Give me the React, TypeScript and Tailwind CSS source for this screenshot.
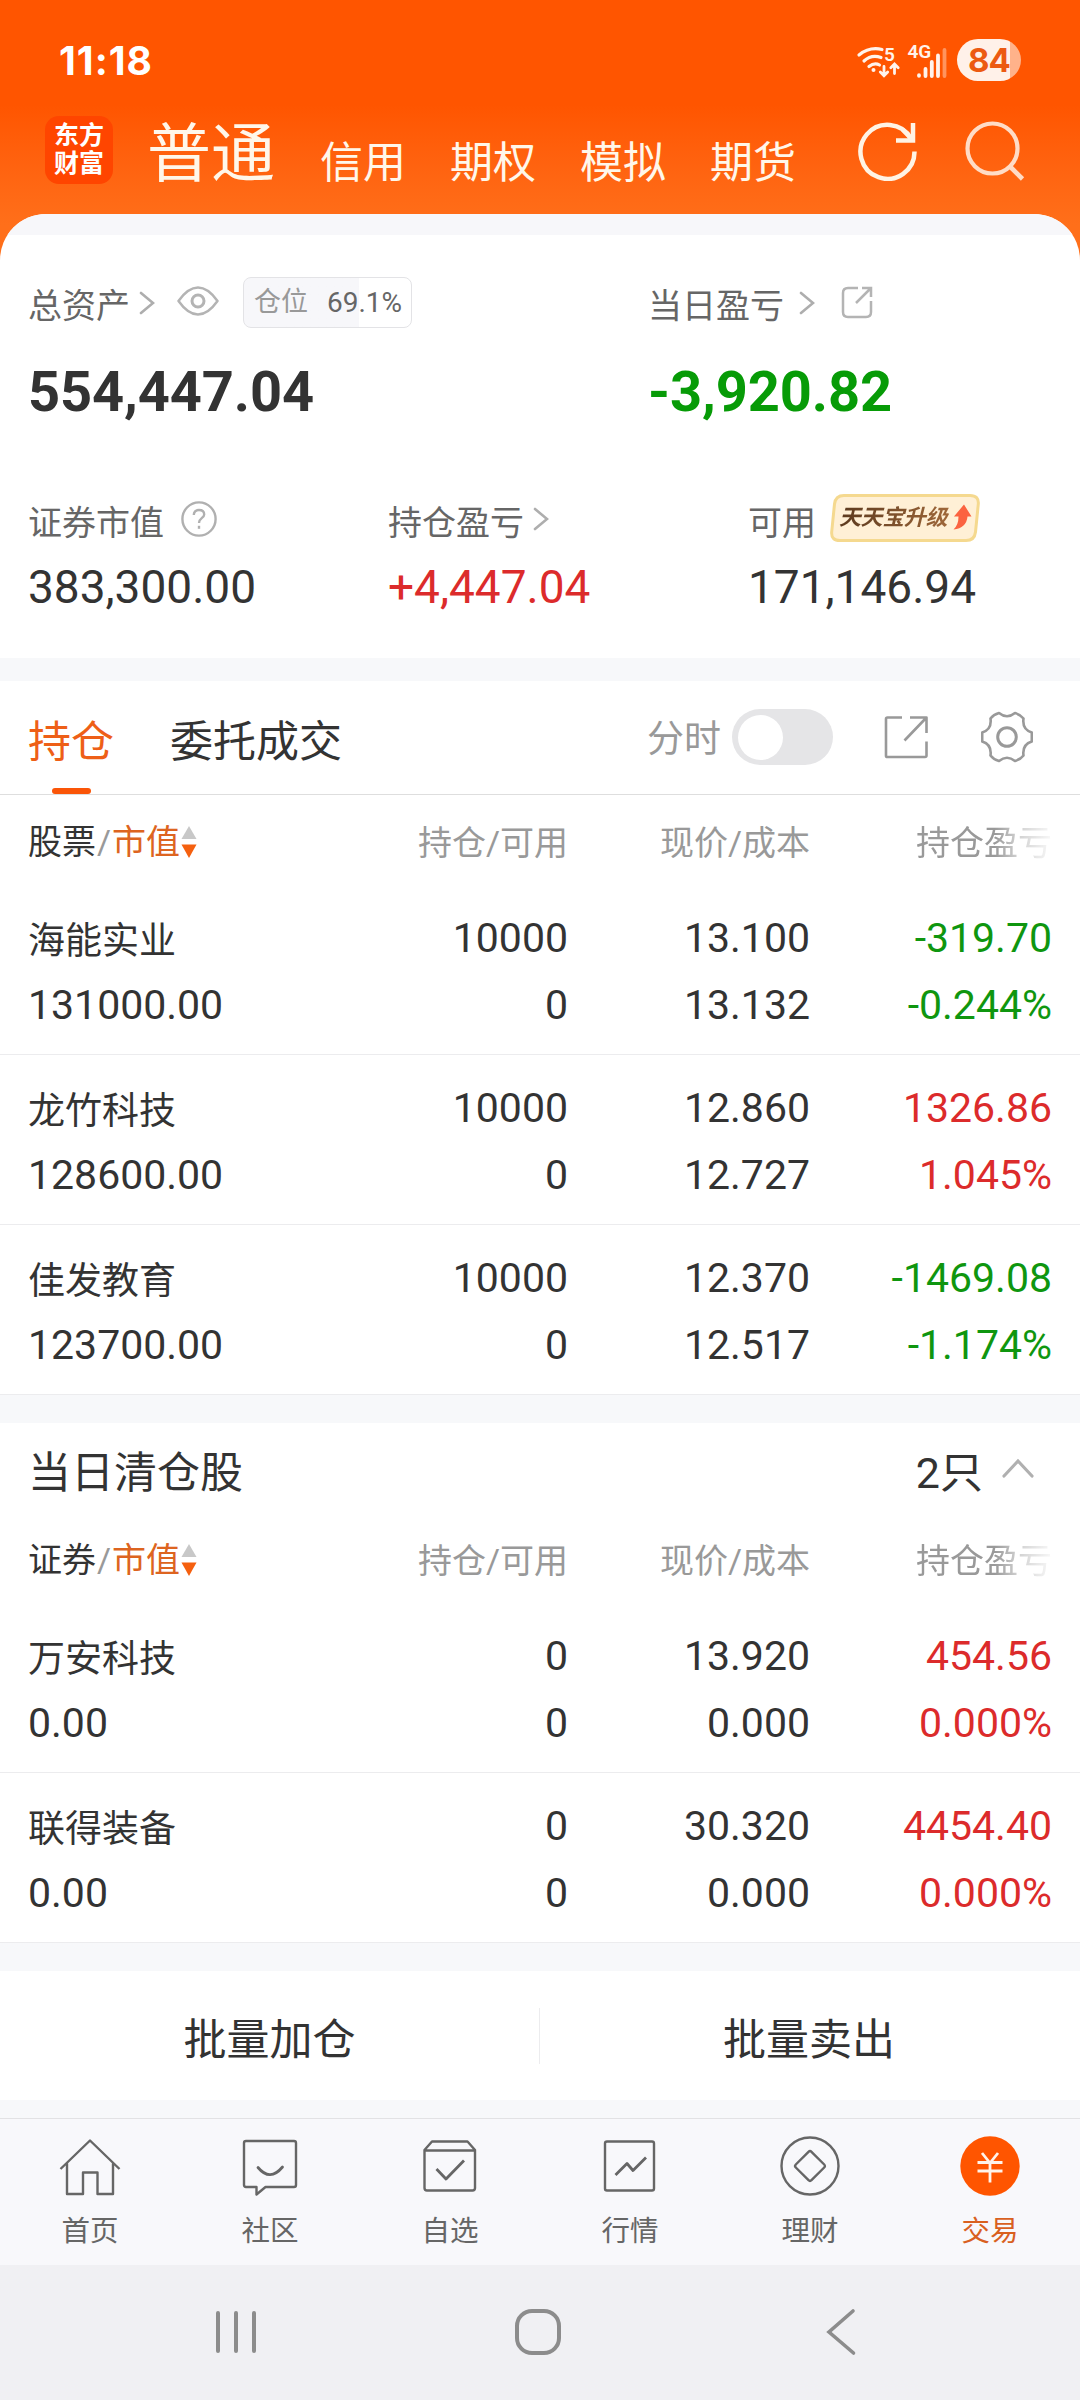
import type { ReactNode } from "react";

/* ──────────────────────────────────────────────
   Data
   ────────────────────────────────────────────── */
type Tone = "up" | "down";

type Holding = {
  name: string;
  value: string;
  amount: string;
  usable: string;
  price: string;
  cost: string;
  profit: string;
  rate: string;
  tone: Tone;
};

const holdings: Holding[] = [
  { name: "海能实业", value: "131000.00", amount: "10000", usable: "0", price: "13.100", cost: "13.132", profit: "-319.70", rate: "-0.244%", tone: "down" },
  { name: "龙竹科技", value: "128600.00", amount: "10000", usable: "0", price: "12.860", cost: "12.727", profit: "1326.86", rate: "1.045%", tone: "up" },
  { name: "佳发教育", value: "123700.00", amount: "10000", usable: "0", price: "12.370", cost: "12.517", profit: "-1469.08", rate: "-1.174%", tone: "down" },
];

const cleared: Holding[] = [
  { name: "万安科技", value: "0.00", amount: "0", usable: "0", price: "13.920", cost: "0.000", profit: "454.56", rate: "0.000%", tone: "up" },
  { name: "联得装备", value: "0.00", amount: "0", usable: "0", price: "30.320", cost: "0.000", profit: "4454.40", rate: "0.000%", tone: "up" },
];

const toneClasses: Record<Tone, string> = {
  up: "text-[#dc2b2b]",
  down: "text-[#0f960f]",
};

/* ──────────────────────────────────────────────
   Icons
   ────────────────────────────────────────────── */
function Chevron({ className = "" }: { className?: string }) {
  return (
    <svg viewBox="0 0 16 24" className={`h-6 w-4 shrink-0 ${className}`} fill="none" stroke="#aeaeae" strokeWidth="2.6" strokeLinecap="round">
      <path d="M2 2l12 10L2 22" />
    </svg>
  );
}

function WifiIcon() {
  return (
    <svg viewBox="0 0 44 34" className="h-[34px] w-11 overflow-visible" fill="none" stroke="#fff3ec" strokeWidth="3.2" strokeLinecap="round">
      <path d="M2 10Q12.500 1.500 25 4.500M7 16Q14.500 9 24 12.500M12 21.500Q17.500 17 22.500 20" />
      <circle cx="16.500" cy="25" r="2" fill="#fff3ec" stroke="none" />
      <path d="M27 21.500V30M23.300 27l3.700 3.700 3.700-3.700M37.500 28.500V19.500M33.800 22.700L37.500 19l3.700 3.700" strokeWidth="2.800" />
      <text x="27" y="15.500" fontSize="19" fontWeight="600" fontFamily="Roboto, sans-serif" fill="#fff3ec" stroke="none">5</text>
    </svg>
  );
}

function SignalIcon() {
  return (
    <svg viewBox="0 0 40 36" className="h-9 w-10 overflow-visible" fill="none" stroke="#fff3ec" strokeWidth="3.800" strokeLinecap="round">
      <text x="-0.500" y="15" fontSize="19" fontWeight="600" fontFamily="Roboto, sans-serif" fill="#fff3ec" stroke="none">4G</text>
      <path d="M11 32.200v.6M17.500 26v7M23.800 19v14M30 12.500V33" />
      <path d="M36.500 7V33" opacity=".4" />
    </svg>
  );
}

function RefreshIcon() {
  return (
    <svg viewBox="0 0 60 60" className="h-[60px] w-[60px]" fill="none" stroke="#fff3e4" strokeWidth="4.500">
      <path d="M56.500 30.500A27 27 0 1 1 53 17.500" />
      <path d="M55 2V19.500H38M44.500 8.500L55 19.500" />
    </svg>
  );
}

function SearchIcon() {
  return (
    <svg viewBox="0 0 60 60" className="h-[60px] w-[60px]" fill="none" stroke="#ffdcc6" strokeWidth="4.200">
      <circle cx="27.500" cy="27.500" r="25" />
      <path d="M45 45.500L57.500 58" strokeWidth="4.600" />
    </svg>
  );
}

function EyeIcon() {
  return (
    <svg viewBox="0 0 42 30" className="h-[30px] w-[42px]" fill="none" stroke="#b4b4b4" strokeWidth="2.500" strokeLinejoin="round">
      <path d="M1.500 15Q11 1.500 21 1.500T40.500 15Q31 28.500 21 28.500T1.500 15z" />
      <circle cx="21" cy="15" r="6" strokeWidth="3" />
    </svg>
  );
}

function ShareIcon() {
  return (
    <svg viewBox="0 0 32 33" className="h-[33px] w-8" fill="none" stroke="#b4b4b4" strokeWidth="2.500">
      <path d="M17 2H7Q2 2 2 7V26Q2 31 7 31H25Q30 31 30 26V15" />
      <path d="M21 2H30V11M30 2L15 17" />
    </svg>
  );
}

function ExportIcon() {
  return (
    <svg viewBox="0 0 44 44" className="h-11 w-11" fill="none" stroke="#999" strokeWidth="2.600" strokeLinejoin="round">
      <path d="M18 2.500H3.500Q2 2.500 2 4V41Q2 42 3.500 42H41Q42.500 42 42.500 40.500V26.500" />
      <path d="M26 2.500H42.500V18M42.500 2.500L20.500 25.500" />
    </svg>
  );
}

function GearIcon() {
  return (
    <svg viewBox="0 0 52 52" className="h-[52px] w-[52px]" fill="none" stroke="#999" strokeWidth="2.600" strokeLinejoin="round">
      <path d="M18 2Q26 8.500 34 2Q39.500 3.500 42.500 7.500Q41 18.500 50.800 21.500V30.500Q41 33.500 42.500 44.500Q39.500 48.500 34 50Q26 43.500 18 50Q12.500 48.500 9.500 44.500Q11 33.500 1.200 30.500V21.500Q11 18.500 9.500 7.500Q12.500 3.500 18 2Z" />
      <circle cx="26" cy="26" r="9.300" strokeWidth="3" />
    </svg>
  );
}

function HelpIcon() {
  return (
    <svg viewBox="0 0 36 36" className="h-9 w-9" fill="none" stroke="#b0b0b0" strokeWidth="2.400">
      <circle cx="18" cy="18" r="16.600" />
      <path d="M12.800 14Q12.800 9 18 9T23.200 13.500C23.200 17 18 17 18 22" />
      <path d="M18 24.800v3" />
    </svg>
  );
}

function SortIcon() {
  return (
    <svg viewBox="0 0 16 34" className="ml-px h-[34px] w-4">
      <path d="M8 1l7.500 13H.5z" fill="#c8c8c8" />
      <path d="M8 33l7.500-13.500H.5z" fill="#f5600f" />
    </svg>
  );
}

/* ──────────────────────────────────────────────
   Header
   ────────────────────────────────────────────── */
function StatusBar() {
  return (
    <div className="flex h-[105px] items-start justify-between pt-[39px] pr-[59px] pl-[59px]">
      <span className="font-['Inter'] text-[39px] leading-[43px] font-bold tracking-[1px] text-white">11:18</span>
      <div className="flex">
        <div className="mt-1.5 mr-[7px]"><WifiIcon /></div>
        <div className="mt-1 mr-[9px]"><SignalIcon /></div>
        <div className="h-[42px] w-16 overflow-hidden rounded-full bg-linear-to-r from-[#fff1e9] from-[83%] to-[#ffb28a] to-[83%] text-center font-['Inter'] text-[33px] leading-[42px] font-bold tracking-[-1px] text-[#ec5a12]">
          84
        </div>
      </div>
    </div>
  );
}

function AccountTabs() {
  return (
    <div className="flex h-[109px] items-start pl-[45px] text-[#fff7ea]">
      <div className="mt-[11px] flex h-[68px] w-[68px] flex-col items-center justify-center rounded-[14px] bg-[#ff4500] text-[25px] leading-[28px] font-bold text-white">
        <span>东方</span>
        <span>财富</span>
      </div>
      <span className="mt-3 ml-[34px] text-[64px] leading-[76px]">普通</span>
      <div className="mt-[33px] ml-[45px] flex gap-[44px] text-[43px] leading-[50px]">
        <span>信用</span>
        <span>期权</span>
        <span>模拟</span>
        <span>期货</span>
      </div>
      <div className="mt-4 ml-[62px] flex gap-[47px]">
        <RefreshIcon />
        <SearchIcon />
      </div>
    </div>
  );
}

/* ──────────────────────────────────────────────
   Asset summary
   ────────────────────────────────────────────── */
function Stat({
  label,
  extra,
  value,
  className = "text-[#333]",
}: {
  label: string;
  extra?: ReactNode;
  value: string;
  className?: string;
}) {
  return (
    <div className="w-[360px] shrink-0">
      <div className="flex h-[54px] items-center text-[34px] text-[#666]">
        <span className="mt-1 leading-[54px]">{label}</span>
        {extra}
      </div>
      <div className={`mt-3 text-[46px] leading-[54px] ${className}`}>{value}</div>
    </div>
  );
}

function UpgradeBadge() {
  return (
    <span className="relative mt-[-6px] ml-[14px] flex h-12 w-[150px] items-center pl-[9px]">
      <svg viewBox="0 0 150 48" className="absolute inset-0 h-12 w-[150px]">
        <path d="M14 1.500H140Q149 1.500 148.300 10L145.500 38Q144.500 46.500 136 46.500H10Q1 46.500 1.700 38L4.500 10Q5.500 1.500 14 1.500z" fill="#fff0d6" stroke="#f5d98f" strokeWidth="3" />
        <path d="M134 10.500L141.500 22.500H137.500Q136.500 34 123.500 35.500Q128.500 31 128.500 22.500H124z" fill="#fb6340" />
      </svg>
      <span className="relative bg-linear-to-r from-[#5c3a1e] to-[#a0683a] bg-clip-text pr-1 text-[22px] leading-[30px] font-bold tracking-[-0.4px] text-transparent italic">天天宝升级</span>
    </span>
  );
}

function Summary() {
  return (
    <section className="h-[444px] overflow-hidden rounded-t-[46px] bg-white">
      <div className="h-[21px] bg-[#f7f7fa]" />
      <div className="flex pt-[42px] pl-[28px]">
        <div className="w-[620px]">
          <div className="flex h-[51px] items-center">
            <span className="mt-2 text-[34px] leading-[51px] text-[#666]">总资产</span>
            <Chevron className="ml-[9px]" />
            <span className="mt-[-3px] ml-[22px]"><EyeIcon /></span>
            <span className="ml-6 flex h-[51px] w-[169px] items-center rounded-lg border border-[#e3e3e6] bg-linear-to-r from-[#f7f7fa] from-[69%] to-white to-[69%] pl-[10px] text-[27px]">
              <span className="text-[#999]">仓位</span>
              <span className="ml-[19px] text-[28px] text-[#666]">69.1%</span>
            </span>
          </div>
          <div className="mt-[30px] text-[56px] leading-[68px] font-bold tracking-[-0.1px] text-[#333]">554,447.04</div>
        </div>
        <div>
          <div className="flex h-[51px] items-center">
            <span className="mt-2 text-[34px] leading-[51px] text-[#666]">当日盈亏</span>
            <Chevron className="ml-[15px]" />
            <span className="ml-[26px]"><ShareIcon /></span>
          </div>
          <div className="mt-[30px] text-[56px] leading-[68px] font-bold tracking-[-0.1px] text-[#079b07]">-3,920.82</div>
        </div>
      </div>
      <div className="mt-[68px] flex pl-[28px]">
        <Stat label="证券市值" value="383,300.00" extra={<span className="mt-[-4px] ml-[17px]"><HelpIcon /></span>} />
        <Stat label="持仓盈亏" value="+4,447.04" className="text-[#dc2b2b]" extra={<Chevron className="mt-[-4px] ml-[9px]" />} />
        <Stat label="可用" value="171,146.94" extra={<UpgradeBadge />} />
      </div>
    </section>
  );
}

/* ──────────────────────────────────────────────
   Holdings
   ────────────────────────────────────────────── */
function PositionTabs() {
  return (
    <div className="flex h-[114px] items-start border-b border-[#dedede] pl-[28px] text-[43px] leading-[60px]">
      <div className="flex flex-col items-center pt-[31px] text-[#ee5f17]">
        <span>持仓</span>
        <span className="mt-4 h-1.5 w-[39px] rounded-full bg-[#fa5508]" />
      </div>
      <span className="ml-[56px] pt-[31px] text-[#333]">委托成交</span>
      <div className="ml-[305px] flex h-[112px] items-center">
        <span className="mt-1.5 text-[37px] text-[#999]">分时</span>
        <span className="ml-[11px] flex h-14 w-[101px] items-center rounded-full bg-[#e5e5e7] pl-1.5">
          <span className="h-[45px] w-[45px] rounded-full bg-white" />
        </span>
        <span className="ml-[51px]"><ExportIcon /></span>
        <span className="ml-[53px]"><GearIcon /></span>
      </div>
    </div>
  );
}

function TableHead({ title }: { title: string }) {
  return (
    <div className="grid h-[90px] grid-cols-[1fr_200px_242px_242px] px-[28px] pt-[3px] text-right text-[34px] leading-[90px] text-[#999]">
      <div className="flex h-[87px] items-center">
        <span className="text-[#333]">{title}</span>
        <span className="px-px">/</span>
        <span className="text-[#dd6420]">市值</span>
        <SortIcon />
      </div>
      <span>持仓/可用</span>
      <span>现价/成本</span>
      <span className="justify-self-end [mask-image:linear-gradient(to_right,black_58%,rgba(0,0,0,0.45)_75%,transparent_104%)]">持仓盈亏</span>
    </div>
  );
}

function HoldingRow({ item }: { item: Holding }) {
  return (
    <div className="grid h-[170px] grid-cols-[1fr_200px_242px_242px] border-b border-[#ececee] px-[28px] pt-5 text-right text-[41px] leading-[67px] text-[#333]">
      <div className="text-left">
        <div className="h-[67px] pt-[3px] text-[37px]">{item.name}</div>
        <div>{item.value}</div>
      </div>
      <div>
        <div>{item.amount}</div>
        <div>{item.usable}</div>
      </div>
      <div>
        <div>{item.price}</div>
        <div>{item.cost}</div>
      </div>
      <div className={toneClasses[item.tone]}>
        <div>{item.profit}</div>
        <div>{item.rate}</div>
      </div>
    </div>
  );
}

/* ──────────────────────────────────────────────
   Bottom navigation
   ────────────────────────────────────────────── */
function NavItem({ label, active, children }: { label: string; active?: boolean; children: ReactNode }) {
  return (
    <div className={`flex flex-1 flex-col items-center pt-4 ${active ? "text-[#d9601f]" : "text-[#666]"}`}>
      <svg viewBox="0 0 62 62" className="mr-px h-[62px] w-[62px]" fill="none" stroke="#666" strokeWidth="2.400" strokeLinejoin="round">
        {children}
      </svg>
      <span className="mt-4 text-[28.500px] leading-[38px]">{label}</span>
    </div>
  );
}

function BottomNav() {
  return (
    <nav className="flex h-[147px] border-t border-[#e2e2e4] bg-[#f8f8fb]">
      <NavItem label="首页">
        <path d="M1.500 34L31 5.500 60.500 34M8 28.500V59H24V37.500H38.500V59H54V28.500" />
      </NavItem>
      <NavItem label="社区">
        <path d="M7 6H55Q57 6 57 8V50Q57 52 55 52H26.500L17.500 59.500V52H7Q5 52 5 50V8Q5 6 7 6z" />
        <path d="M19 32.500Q31 47 43.500 32" strokeLinecap="round" strokeWidth="2.800" />
      </NavItem>
      <NavItem label="自选">
        <path d="M5.500 15L13 6.500H48.500L56 15V53Q56 55.500 53.500 55.500H8Q5.500 55.500 5.500 53zM5.500 15.500H56" />
        <path d="M17.500 34L27 44 45 25.500" strokeWidth="2.800" />
      </NavItem>
      <NavItem label="行情">
        <rect x="6" y="6.500" width="49" height="49" rx="2" />
        <path d="M16.500 40L28 28.500 34 35.500 47 22.500" strokeWidth="2.800" />
      </NavItem>
      <NavItem label="理财">
        <circle cx="31" cy="31" r="28.500" />
        <path d="M29.500 16.800Q31 15.300 32.500 16.800L45.200 29.500Q46.700 31 45.200 32.500L32.500 45.200Q31 46.700 29.500 45.200L16.800 32.500Q15.300 31 16.800 29.500z" />
      </NavItem>
      <NavItem label="交易" active>
        <circle cx="31" cy="31" r="29.700" fill="#ff5500" stroke="none" />
        <path d="M23 18L31 28 39 18M31 28V47.500M18.500 27.500H43.500M18.500 36H43.500" stroke="#fff3ea" strokeWidth="2.800" />
      </NavItem>
    </nav>
  );
}

function SystemNav() {
  return (
    <div className="flex h-[135px] items-start bg-[#f0f0f3] pt-[43px]">
      <svg viewBox="0 0 42 48" className="ml-[215px] h-12 w-[42px]" fill="none" stroke="#8c8c8c" strokeWidth="4" strokeLinecap="round">
        <path d="M3 5V43M21 5V43M39 5V43" />
      </svg>
      <svg viewBox="0 0 48 48" className="ml-[257px] h-12 w-12" fill="none" stroke="#8c8c8c" strokeWidth="4">
        <rect x="3" y="3" width="42" height="42" rx="15" />
      </svg>
      <svg viewBox="0 0 32 48" className="ml-[263px] h-12 w-8" fill="none" stroke="#8c8c8c" strokeWidth="3.600" strokeLinecap="round">
        <path d="M28 3L4 24 28.500 45" />
      </svg>
    </div>
  );
}

export default function App() {
  return (
    <div className="h-[2400px] w-[1080px] overflow-hidden bg-[#f7f8fa] font-['Roboto','Noto_Sans_CJK_SC',sans-serif] whitespace-nowrap">
      <div className="bg-linear-to-b from-[#ff5500] from-[105px] to-[#ff6f1a] to-[225px]">
        <StatusBar />
        <AccountTabs />
        <Summary />
      </div>

      <section className="mt-[23px] bg-white">
        <PositionTabs />
        <TableHead title="股票" />
        {holdings.map((item) => (
          <HoldingRow key={item.name} item={item} />
        ))}
      </section>

      <section className="mt-7 bg-white">
        <div className="flex h-[90px] items-center pt-2 pr-[46px] pl-[28px] text-[43px] leading-[82px] text-[#333]">
          <span className="pt-0.5">当日清仓股</span>
          <span className="ml-auto pt-0.5">2只</span>
          <svg viewBox="0 0 32 20" className="mt-[-9px] ml-[19px] h-5 w-8" fill="none" stroke="#b0b0b0" strokeWidth="3.200" strokeLinecap="round">
            <path d="M2 18L16 3 30 18" />
          </svg>
        </div>
        <TableHead title="证券" />
        {cleared.map((item) => (
          <HoldingRow key={item.name} item={item} />
        ))}
      </section>

      <div className="mt-7 mb-[18px] flex h-[129px] items-center bg-white text-center text-[43px] leading-[60px] text-[#333]">
        <span className="w-[539px] pt-[9px]">批量加仓</span>
        <span className="h-14 w-px bg-[#ececee]" />
        <span className="flex-1 pt-[9px] pr-0.5">批量卖出</span>
      </div>

      <BottomNav />
      <SystemNav />
    </div>
  );
}
